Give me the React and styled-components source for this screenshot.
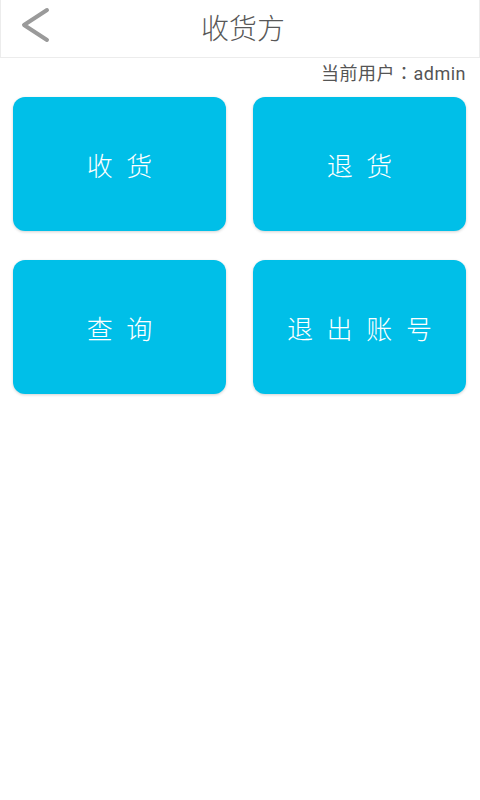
import React from "react";
import styled, { createGlobalStyle } from "styled-components";

const Global = createGlobalStyle`
  html, body { margin: 0; padding: 0; background: #fff; }
  body { font-family: Roboto, "Noto Sans CJK SC", "Noto Sans", sans-serif; }
  * { box-sizing: border-box; }
`;

const Page = styled.div`
  width: 480px;
  min-height: 800px;
  background: #fff;
  display: flex;
  flex-direction: column;
`;

const Header = styled.header`
  height: 58px;
  border: 1px solid #ececec;
  border-top: none;
  display: flex;
  align-items: center;
  justify-content: center;
  position: relative;
`;

const BackButton = styled.button`
  position: absolute;
  left: 14px;
  top: 4px;
  width: 38px;
  height: 42px;
  padding: 0;
  border: none;
  background: transparent;
  display: flex;
  align-items: center;
  justify-content: center;
`;

const Title = styled.h1`
  margin: 0 0 0 6px;
  font-family: "Noto Sans CJK SC", sans-serif;
  font-size: 28px;
  font-weight: 300;
  color: #585858;
  line-height: 1;
  margin-top: -3px;
`;

const UserLine = styled.div`
  text-align: right;
  padding: 3px 14px 0 0;
  font-family: Roboto, "Noto Sans CJK TC", sans-serif;
  font-size: 18px;
  letter-spacing: 0.5px;
  color: #555;
  line-height: 26px;
  height: 39px;
`;

const Grid = styled.div`
  display: grid;
  grid-template-columns: 213px 213px;
  column-gap: 27px;
  row-gap: 29px;
  padding: 0 13px;
`;

const Tile = styled.button`
  height: 134px;
  border: none;
  border-radius: 12px;
  background: #00bfe8;
  box-shadow: 0 1px 3px rgba(0, 0, 0, 0.18);
  color: #fff;
  font-family: "Noto Sans CJK SC", sans-serif;
  font-size: 26px;
  font-weight: 300;
  letter-spacing: 4px;
  text-indent: 4px;
  display: flex;
  align-items: center;
  justify-content: center;
  padding: 0;
  white-space: pre;
`;

const items = ["收 货", "退 货", "查 询", "退 出 账 号"];

export default function App() {
  return (
    <Page>
      <Global />
      <Header>
        <BackButton aria-label="返回">
          <svg width="32" height="40" viewBox="0 0 32 40">
            <polyline
              points="29,5 6,20 29,35"
              fill="none"
              stroke="#9a9a9a"
              strokeWidth="4"
              strokeLinecap="round"
              strokeLinejoin="round"
            />
          </svg>
        </BackButton>
        <Title>收货方</Title>
      </Header>
      <UserLine>当前用户：admin</UserLine>
      <Grid>
        {items.map((t) => (
          <Tile key={t}>{t}</Tile>
        ))}
      </Grid>
    </Page>
  );
}
